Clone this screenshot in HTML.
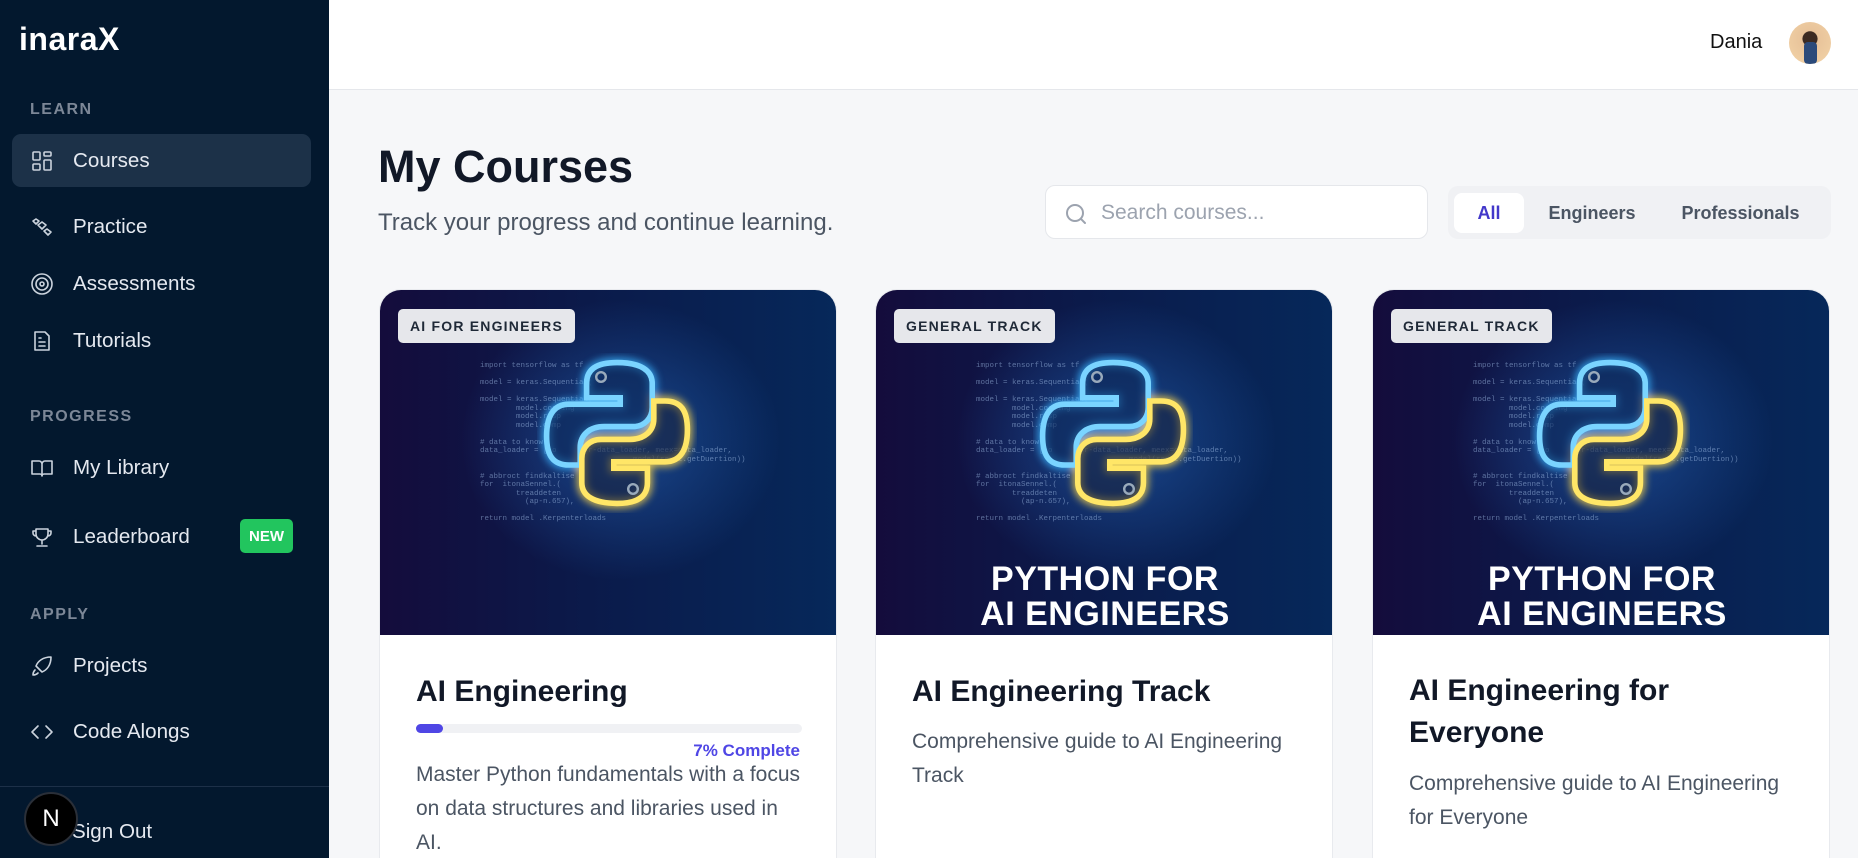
<!DOCTYPE html>
<html><head><meta charset="utf-8">
<style>
*{box-sizing:border-box;margin:0;padding:0}
html{width:1858px;height:858px;overflow:hidden}
body{width:1858px;height:858px;overflow:hidden;font-family:"Liberation Sans",Arial,sans-serif;background:#f6f7f9;position:relative}
.side{position:absolute;left:0;top:0;width:329px;height:858px;background:#03182e;color:#e2e8f0}
.logo{position:absolute;left:19px;top:21px;font-size:32px;font-weight:700;color:#fff;letter-spacing:0.5px}
.lbl{position:absolute;left:30px;font-size:16px;font-weight:700;letter-spacing:1.5px;color:#7c8797}
.item{position:absolute;left:30px;height:30px;display:flex;align-items:center;font-size:20.6px;color:#e5e9f0}
.item svg{width:24px;height:24px;margin-right:19px;fill:none;stroke:#cbd3dd;stroke-width:1.6;stroke-linecap:round;stroke-linejoin:round}
.active{position:absolute;left:12px;top:134px;width:299px;height:53px;background:#1c3148;border-radius:9px}
.new{position:absolute;left:240px;top:519px;width:53px;height:34px;background:#22c55e;border-radius:5px;color:#fff;font-weight:700;font-size:15px;display:flex;align-items:center;justify-content:center}
.div{position:absolute;left:0;top:786px;width:329px;height:1px;background:#1d3048}
.ncirc{position:absolute;left:24px;top:792px;width:54px;height:54px;border-radius:50%;background:#000;border:2px solid #2a2f38;color:#fff;font-size:24px;display:flex;align-items:center;justify-content:center}
.top{position:absolute;left:329px;top:0;right:0;height:90px;background:#fff;border-bottom:1px solid #e5e7eb}
.dania{position:absolute;left:1710px;top:31px;font-size:20px;color:#111}
.av{position:absolute;left:1789px;top:22px;width:42px;height:42px;border-radius:50%;background:radial-gradient(circle at 50% 40%,#3b2a22 0 22%,#e8c39a 24%,#f3d4a8 100%);overflow:hidden}
.av:after{content:"";position:absolute;left:15px;top:20px;width:13px;height:22px;background:#2b4a7a;border-radius:4px}
h1{position:absolute;left:378px;top:141px;font-size:45px;font-weight:700;color:#111827}
.sub{position:absolute;left:378px;top:209px;font-size:24px;color:#4b5563}
.search{position:absolute;left:1045px;top:185px;width:383px;height:54px;background:#fff;border:1px solid #e5e7eb;border-radius:10px}
.search span{position:absolute;left:55px;top:15px;font-size:21px;color:#9ca3af}
.search svg{position:absolute;left:18px;top:16px}
.tabs{position:absolute;left:1448px;top:186px;width:383px;height:53px;background:#f0f1f4;border-radius:10px}
.tab{position:absolute;top:7px;height:40px;font-size:18px;font-weight:700;color:#4b5563;display:flex;align-items:center;justify-content:center}
.card{position:absolute;top:289px;width:458px;height:600px;background:#fff;border:1px solid #e8eaee;border-radius:22px;overflow:hidden}
.img{position:absolute;left:0;top:0;width:458px;height:345px;background:radial-gradient(ellipse 160px 140px at 240px 150px,rgba(40,110,200,.55),rgba(0,0,0,0)),linear-gradient(90deg,#140c3c 0%,#0b1a4a 45%,#06285a 100%)}
.badge{position:absolute;left:18px;top:19px;height:34px;padding:0 12px;background:#e6e7eb;border-radius:5px;font-size:14px;font-weight:700;letter-spacing:1.2px;color:#1f2937;display:flex;align-items:center}
.code{position:absolute;left:100px;top:72px;font-family:"Liberation Mono",monospace;font-size:7.5px;line-height:8.5px;color:rgba(170,200,240,.5);white-space:pre}
.logo2{position:absolute;left:157px;top:63px;width:160px;height:160px}
.big{position:absolute;left:0;width:458px;text-align:center;color:#fff;font-weight:700;font-size:34px;line-height:35px;top:272px;letter-spacing:.5px}
.t{position:absolute;left:36px;font-size:30px;font-weight:700;color:#111827;line-height:42px}
.d{position:absolute;left:36px;width:388px;font-size:21px;color:#4b5563;line-height:34px}
.bar{position:absolute;left:36px;top:434px;width:386px;height:9px;border-radius:5px;background:#f0f1f4}
.bar i{position:absolute;left:0;top:0;width:27px;height:9px;border-radius:5px;background:#4f46e5}
.pc{position:absolute;right:36px;top:451px;font-size:17px;font-weight:700;color:#4f46e5}
</style></head><body>
<div class="side">
<div class="logo">inaraX</div>
<div class="lbl" style="top:101px">LEARN</div>
<div class="active"></div>
<div class="item" style="top:146px"><svg viewBox="0 0 24 24"><rect x="3" y="3" width="7" height="8" rx="1"/><rect x="14" y="3" width="7" height="4" rx="1"/><rect x="14" y="11" width="7" height="10" rx="1"/><rect x="3" y="15" width="7" height="6" rx="1"/></svg>Courses</div>
<div class="item" style="top:212px"><svg viewBox="0 0 24 24"><path d="M3 6l3-2 3 2-3 3zM8 10l4-3 4 3-4 4zM14 16l3-2 4 3-3 3z"/></svg>Practice</div>
<div class="item" style="top:269px"><svg viewBox="0 0 24 24"><circle cx="12" cy="12" r="10"/><circle cx="12" cy="12" r="6"/><circle cx="12" cy="12" r="2"/></svg>Assessments</div>
<div class="item" style="top:326px"><svg viewBox="0 0 24 24"><path d="M5 3h10l4 4v14H5z"/><path d="M9 9h2M9 13h6M9 17h6"/></svg>Tutorials</div>
<div class="lbl" style="top:408px">PROGRESS</div>
<div class="item" style="top:453px"><svg viewBox="0 0 24 24"><path d="M2 5h7a3 3 0 013 3v12a2 2 0 00-2-2H2zM22 5h-7a3 3 0 00-3 3v12a2 2 0 012-2h8z"/></svg>My Library</div>
<div class="item" style="top:522px"><svg viewBox="0 0 24 24"><path d="M6 4h12v5a6 6 0 01-12 0zM6 6H3v2a3 3 0 003 3M18 6h3v2a3 3 0 01-3 3M12 15v4M7 21h10"/></svg>Leaderboard</div>
<div class="new">NEW</div>
<div class="lbl" style="top:606px">APPLY</div>
<div class="item" style="top:651px"><svg viewBox="0 0 24 24"><path d="M5 16c-2 2-2 5-2 5s3 0 5-2M9 15l-3-3c2-5 7-9 15-9 0 8-4 13-9 15z"/></svg>Projects</div>
<div class="item" style="top:717px"><svg viewBox="0 0 24 24"><path d="M8 6l-6 6 6 6M16 6l6 6-6 6"/></svg>Code Alongs</div>
<div class="div"></div>
<div class="item" style="top:817px;left:72px">Sign Out</div>
<div class="ncirc">N</div>
</div>
<div class="top"></div>
<div class="dania">Dania</div>
<div class="av"></div>
<h1>My Courses</h1>
<div class="sub">Track your progress and continue learning.</div>
<div class="search"><svg width="24" height="24" viewBox="0 0 24 24" fill="none" stroke="#9ca3af" stroke-width="2" stroke-linecap="round"><circle cx="11" cy="11" r="8"/><path d="M21 21l-4.3-4.3"/></svg><span>Search courses...</span></div>
<div class="tabs">
<div class="tab" style="left:6px;width:70px;background:#fff;border-radius:8px;color:#4338ca">All</div>
<div class="tab" style="left:94px;width:100px">Engineers</div>
<div class="tab" style="left:210px;width:165px">Professionals</div>
</div>

<div class="card" style="left:379px">
<div class="img">
<div class="code">import tensorflow as tf

model = keras.Sequential(

model = keras.Sequential(
        model.costing
        model.resp
        model.comp

# data to know
data_loader = [no     esr-data_loader, meex=data_loader,
                                  model(senst.getDuertion))

# abbroct findkaltise
for  itonaSennel.(
        treaddeten
          (ap-n.657),

return model .Kerpenterloads</div>
<svg class="logo2" viewBox="0 0 100 100"><defs><filter id="g1"><feGaussianBlur stdDeviation="2.5"/></filter></defs>
<g filter="url(#g1)" opacity=".8"><path d="M50 6C36 6 31 11 31 19V28H52V32H20C10 32 6 40 6 52S10 70 20 70H27V59C27 51 33 46 42 46H60C67 46 72 41 72 34V19C72 11 65 6 50 6Z" fill="none" stroke="#3ab4ff" stroke-width="6"/><path d="M50 94C64 94 69 89 69 81V72H48V68H80C90 68 94 60 94 48S90 30 80 30H73V41C73 49 67 54 58 54H40C33 54 28 59 28 66V81C28 89 35 94 50 94Z" fill="none" stroke="#ffd84a" stroke-width="6"/></g>
<path d="M50 6C36 6 31 11 31 19V28H52V32H20C10 32 6 40 6 52S10 70 20 70H27V59C27 51 33 46 42 46H60C67 46 72 41 72 34V19C72 11 65 6 50 6Z" fill="rgba(13,42,90,.6)" stroke="#7ad4ff" stroke-width="3.5"/><circle cx="40" cy="15" r="3" fill="none" stroke="#9ab" stroke-width="1.5"/>
<path d="M50 94C64 94 69 89 69 81V72H48V68H80C90 68 94 60 94 48S90 30 80 30H73V41C73 49 67 54 58 54H40C33 54 28 59 28 66V81C28 89 35 94 50 94Z" fill="rgba(26,36,64,.6)" stroke="#ffe667" stroke-width="3.5"/><circle cx="60" cy="85" r="3" fill="none" stroke="#9ab" stroke-width="1.5"/></svg>
<div class="badge">AI FOR ENGINEERS</div>
</div>
<div class="t" style="top:381px">AI Engineering</div>
<div class="bar"><i></i></div>
<div class="pc">7% Complete</div>
<div class="d" style="top:468px">Master Python fundamentals with a focus on data structures and libraries used in AI.</div>
</div>

<div class="card" style="left:875px">
<div class="img">
<div class="code">import tensorflow as tf

model = keras.Sequential(

model = keras.Sequential(
        model.costing
        model.resp
        model.comp

# data to know
data_loader = [no     esr-data_loader, meex=data_loader,
                                  model(senst.getDuertion))

# abbroct findkaltise
for  itonaSennel.(
        treaddeten
          (ap-n.657),

return model .Kerpenterloads</div>
<svg class="logo2" viewBox="0 0 100 100"><g filter="url(#g1)" opacity=".8"><path d="M50 6C36 6 31 11 31 19V28H52V32H20C10 32 6 40 6 52S10 70 20 70H27V59C27 51 33 46 42 46H60C67 46 72 41 72 34V19C72 11 65 6 50 6Z" fill="none" stroke="#3ab4ff" stroke-width="6"/><path d="M50 94C64 94 69 89 69 81V72H48V68H80C90 68 94 60 94 48S90 30 80 30H73V41C73 49 67 54 58 54H40C33 54 28 59 28 66V81C28 89 35 94 50 94Z" fill="none" stroke="#ffd84a" stroke-width="6"/></g>
<path d="M50 6C36 6 31 11 31 19V28H52V32H20C10 32 6 40 6 52S10 70 20 70H27V59C27 51 33 46 42 46H60C67 46 72 41 72 34V19C72 11 65 6 50 6Z" fill="rgba(13,42,90,.6)" stroke="#7ad4ff" stroke-width="3.5"/><circle cx="40" cy="15" r="3" fill="none" stroke="#9ab" stroke-width="1.5"/>
<path d="M50 94C64 94 69 89 69 81V72H48V68H80C90 68 94 60 94 48S90 30 80 30H73V41C73 49 67 54 58 54H40C33 54 28 59 28 66V81C28 89 35 94 50 94Z" fill="rgba(26,36,64,.6)" stroke="#ffe667" stroke-width="3.5"/><circle cx="60" cy="85" r="3" fill="none" stroke="#9ab" stroke-width="1.5"/></svg>
<div class="big">PYTHON FOR<br>AI ENGINEERS</div>
<div class="badge">GENERAL TRACK</div>
</div>
<div class="t" style="top:381px">AI Engineering Track</div>
<div class="d" style="top:435px">Comprehensive guide to AI Engineering Track</div>
</div>

<div class="card" style="left:1372px">
<div class="img">
<div class="code">import tensorflow as tf

model = keras.Sequential(

model = keras.Sequential(
        model.costing
        model.resp
        model.comp

# data to know
data_loader = [no     esr-data_loader, meex=data_loader,
                                  model(senst.getDuertion))

# abbroct findkaltise
for  itonaSennel.(
        treaddeten
          (ap-n.657),

return model .Kerpenterloads</div>
<svg class="logo2" viewBox="0 0 100 100"><g filter="url(#g1)" opacity=".8"><path d="M50 6C36 6 31 11 31 19V28H52V32H20C10 32 6 40 6 52S10 70 20 70H27V59C27 51 33 46 42 46H60C67 46 72 41 72 34V19C72 11 65 6 50 6Z" fill="none" stroke="#3ab4ff" stroke-width="6"/><path d="M50 94C64 94 69 89 69 81V72H48V68H80C90 68 94 60 94 48S90 30 80 30H73V41C73 49 67 54 58 54H40C33 54 28 59 28 66V81C28 89 35 94 50 94Z" fill="none" stroke="#ffd84a" stroke-width="6"/></g>
<path d="M50 6C36 6 31 11 31 19V28H52V32H20C10 32 6 40 6 52S10 70 20 70H27V59C27 51 33 46 42 46H60C67 46 72 41 72 34V19C72 11 65 6 50 6Z" fill="rgba(13,42,90,.6)" stroke="#7ad4ff" stroke-width="3.5"/><circle cx="40" cy="15" r="3" fill="none" stroke="#9ab" stroke-width="1.5"/>
<path d="M50 94C64 94 69 89 69 81V72H48V68H80C90 68 94 60 94 48S90 30 80 30H73V41C73 49 67 54 58 54H40C33 54 28 59 28 66V81C28 89 35 94 50 94Z" fill="rgba(26,36,64,.6)" stroke="#ffe667" stroke-width="3.5"/><circle cx="60" cy="85" r="3" fill="none" stroke="#9ab" stroke-width="1.5"/></svg>
<div class="big">PYTHON FOR<br>AI ENGINEERS</div>
<div class="badge">GENERAL TRACK</div>
</div>
<div class="t" style="top:380px;width:390px">AI Engineering for Everyone</div>
<div class="d" style="top:477px">Comprehensive guide to AI Engineering for Everyone</div>
</div>
</body></html>
